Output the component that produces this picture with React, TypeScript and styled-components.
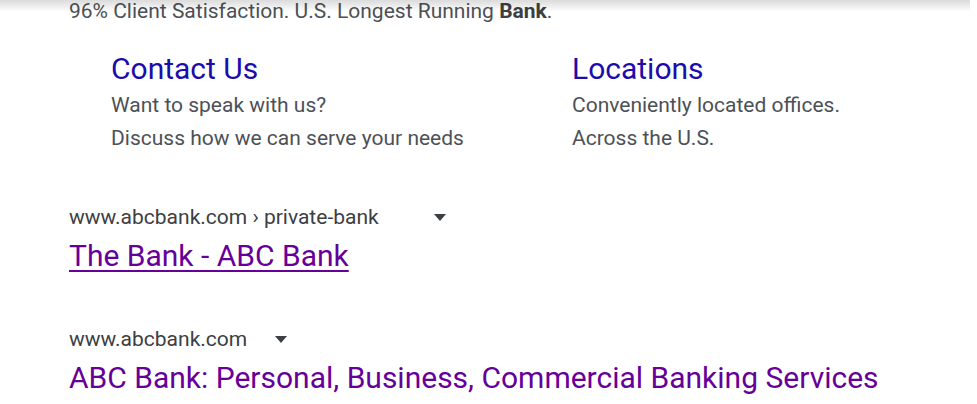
import styled, { createGlobalStyle } from "styled-components";

const GlobalStyle = createGlobalStyle`
  body {
    margin: 0;
    background: #fff;
    font-family: Roboto, "Liberation Sans", Arial, sans-serif;
    color: #4d5156;
  }
`;

const sitelinks = [
  {
    title: "Contact Us",
    lines: ["Want to speak with us?", "Discuss how we can serve your needs"],
  },
  {
    title: "Locations",
    lines: ["Conveniently located offices.", "Across the U.S."],
  },
];

const results = [
  { url: "www.abcbank.com › private-bank", title: "The Bank - ABC Bank", underline: true, caretGap: 55 },
  { url: "www.abcbank.com", title: "ABC Bank: Personal, Business, Commercial Banking Services", underline: false, caretGap: 28 },
];

function Caret() {
  return (
    <svg width="12" height="7" viewBox="0 0 12 7">
      <path d="M0 0h12L6 7z" fill="#3c4043" />
    </svg>
  );
}

function App() {
  return (
    <>
      <GlobalStyle />
      <HeaderShadow />
      <Page>
        <Snippet>
          96% Client Satisfaction. U.S. Longest Running <b>Bank</b>.
        </Snippet>
        <Sitelinks>
          {sitelinks.map((s) => (
            <Sitelink key={s.title}>
              <SitelinkTitle href="#">{s.title}</SitelinkTitle>
              {s.lines.map((l) => (
                <SitelinkLine key={l}>{l}</SitelinkLine>
              ))}
            </Sitelink>
          ))}
        </Sitelinks>
        <Results>
          {results.map((r) => (
            <Result key={r.title}>
              <UrlRow $gap={r.caretGap}>
                <span>{r.url}</span>
                <Caret />
              </UrlRow>
              <ResultTitle href="#" $underline={r.underline}>
                {r.title}
              </ResultTitle>
            </Result>
          ))}
        </Results>
      </Page>
    </>
  );
}

const HeaderShadow = styled.div`
  position: fixed;
  top: 0;
  left: 0;
  width: 970px;
  height: 12px;
  background: linear-gradient(to bottom, rgba(0, 0, 0, 0.14), rgba(0, 0, 0, 0));
  pointer-events: none;
`;

const Page = styled.div`
  padding: 0 0 0 69px;
  margin-top: -3px;
  overflow: hidden;
`;

const Snippet = styled.div`
  font-size: 21px;
  line-height: 28px;
  b {
    color: #3c4043;
  }
`;

const Sitelinks = styled.div`
  display: grid;
  grid-template-columns: 461px 1fr;
  padding-left: 42px;
  margin-top: 24px;
`;

const Sitelink = styled.div`
  display: flex;
  flex-direction: column;
`;

const SitelinkTitle = styled.a`
  font-size: 30px;
  line-height: 40px;
  color: #1a0dab;
  text-decoration: none;
`;

const SitelinkLine = styled.div`
  font-size: 21px;
  line-height: 33px;
  color: #4d5156;
`;

const Results = styled.div`
  display: flex;
  flex-direction: column;
  gap: 44px;
  margin-top: 47px;
`;

const Result = styled.div`
  display: flex;
  flex-direction: column;
`;

const UrlRow = styled.div<{ $gap: number }>`
  display: flex;
  align-items: center;
  gap: ${(p) => p.$gap}px;
  font-size: 21px;
  line-height: 30px;
  color: #3c4043;
`;

const ResultTitle = styled.a<{ $underline: boolean }>`
  align-self: flex-start;
  font-size: 30px;
  line-height: 48px;
  color: #660099;
  text-decoration: ${(p) => (p.$underline ? "underline" : "none")};
  text-decoration-thickness: 2px;
  text-underline-offset: 4px;
`;

export default App;
